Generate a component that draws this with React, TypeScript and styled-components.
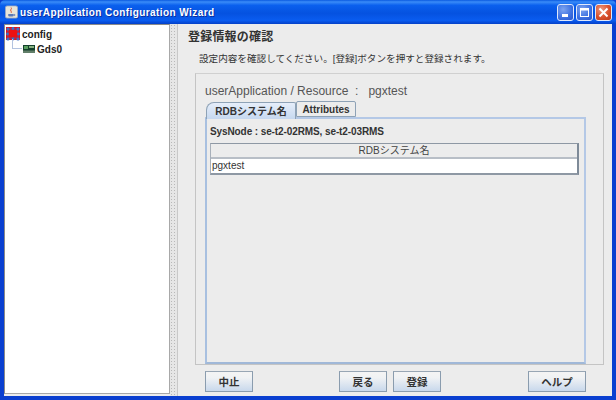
import React from "react";
import styled, { createGlobalStyle } from "styled-components";

const Global = createGlobalStyle`
  html, body { margin: 0; padding: 0; background: #ececec; }
  body { font-family: "Liberation Sans", "Noto Sans CJK JP", sans-serif; }
  * { box-sizing: border-box; }
`;

const Win = styled.div`
  width: 616px; height: 400px; display: flex; flex-direction: column;
  background: #0a3fd0; overflow: hidden;
`;
const TitleBar = styled.div`
  height: 24px; flex: none; display: flex; align-items: center; padding: 0 4px 0 5px;
  background: linear-gradient(180deg, #0a5ae0 0%, #3a8cf8 8%, #0a60ee 22%, #0552e0 55%, #0a5cf0 85%, #0440c8 100%);
  border-radius: 5px 5px 0 0;
`;
const TitleIcon = styled.svg`width: 13px; height: 14px; flex: none; margin-right: 2px;`;
const TitleText = styled.div`
  color: #fff; font: bold 10px "Liberation Sans", sans-serif; letter-spacing: 0.42px;
  text-shadow: 1px 1px 0 #0a2fa0; flex: 1; white-space: nowrap;
`;
const WinBtns = styled.div`display: flex; gap: 2px;`;
const WinBtn = styled.div<{ $close?: boolean }>`
  width: 17px; height: 17px; border: 1px solid #dfe8fb; border-radius: 3px;
  display: flex; align-items: center; justify-content: center;
  background: ${(p) => p.$close
    ? "radial-gradient(circle at 35% 30%, #ee9a80, #d8502c 55%, #bb3a1a)"
    : "radial-gradient(circle at 35% 30%, #7da4f0, #3b6fe0 60%, #2a55cc)"};
`;
const Body = styled.div`
  flex: 1; min-height: 0; display: flex; margin: 0 4px 4px 4px; background: #ececec;
`;
const TreePane = styled.div`
  width: 166px; flex: none; background: #fff; padding: 2px 0 0 1px; margin-bottom: 2px;
  border: 1px solid #a8a8a8; border-top-color: #8a8a8a; border-left-color: #8a8a8a;
`;
const TreeRow = styled.div<{ $indent?: boolean }>`
  height: 14px; display: flex; align-items: center; gap: 2px; position: relative;
  font: bold 10px "Liberation Sans", sans-serif; color: #222;
  margin-left: ${(p) => (p.$indent ? "17px" : "0")};
  margin-bottom: 1px;
`;
const Elbow = styled.span`
  position: absolute; left: -11px; top: -3px; width: 10px; height: 10px;
  border-left: 1px solid #b4c4e0; border-bottom: 1px solid #b4c4e0;
`;
const Splitter = styled.div`
  width: 8px; flex: none; background: #e6e6e6;
  background-image: radial-gradient(#b8b8b8 0.6px, transparent 0.8px);
  background-size: 3px 3px;
  border-right: 1px solid #c8c8c8;
`;
const Main = styled.div`
  flex: 1; min-width: 0; display: flex; flex-direction: column; padding: 5px 16px 2px 17px;
`;
const Heading = styled.div`
  font-size: 12px; font-weight: 700; color: #333; line-height: 16px; margin-left: -7px;
  letter-spacing: 0.2px;
`;
const Sub = styled.div`
  font-size: 9.6px; color: #333; line-height: 14px; margin: 7px 0 0 4px; white-space: nowrap;
`;
const Frame = styled.div`
  flex: none; height: 292px; margin: 7px -8px 0 0; padding: 10px 9px 0 9px;
  border: 1px solid #c4c4c4; border-top-color: #d0d0d0; display: flex; flex-direction: column;
`;
const ResLine = styled.div`
  font-size: 12px; color: #555; line-height: 14px; white-space: pre;
`;
const Tabs = styled.div`
  display: flex; align-items: flex-end; height: 16px; margin: 3px 0 0 1px; z-index: 1;
`;
const Tab = styled.div<{ $active?: boolean }>`
  height: ${(p) => (p.$active ? "17px" : "16px")};
  width: ${(p) => (p.$active ? "90px" : "60px")};
  margin-bottom: ${(p) => (p.$active ? "-2px" : "0")};
  padding-bottom: ${(p) => (p.$active ? "2px" : "0")};
  border: 1px solid #8ea2b6; border-bottom: ${(p) => (p.$active ? "none" : "1px solid #8ea2b6")};
  border-radius: ${(p) => (p.$active ? "8px 2px 0 0" : "2px 2px 0 0")};
  background: ${(p) => (p.$active ? "linear-gradient(180deg,#e6eefa,#c6d8ef)" : "#ececec")};
  font-size: 10px; font-weight: 700; color: #333;
  display: flex; align-items: center; justify-content: center;
`;
const TabPanel = styled.div`
  flex: none; height: 247px; padding: 6px 6px 0 3px;
  border: 2px solid #b4c8e6; border-left-color: #a8c0e0; border-bottom-color: #a0b8d8;
  width: 381px;
`;
const SysNode = styled.div`
  font-size: 10px; font-weight: 700; color: #333; line-height: 14px; white-space: pre;
  letter-spacing: -0.1px;
`;
const Table = styled.div`
  margin-top: 4px; width: 369px; border: 1px solid #8e98a4; border-left-color: #a8b0ba;
  border-right: 2px solid #7e8a98; border-bottom: 2px solid #8e98a4;
`;
const HeadCell = styled.div`
  height: 15px; background: #ececec; border-bottom: 2px solid #b8bec6;
  font-size: 10px; color: #444; text-align: center; line-height: 14px;
`;
const BodyCell = styled.div`
  height: 14px; background: #fff; font-size: 10px; color: #333; line-height: 14px; padding-left: 1px;
`;
const Footer = styled.div`
  display: flex; align-items: center; margin-top: 6px; padding: 0 0 0 10px; margin-right: -8px;
`;
const Btn = styled.div<{ $w?: number; $gap?: number }>`
  width: ${(p) => p.$w ?? 48}px; height: 21px; margin-left: ${(p) => p.$gap ?? 0}px;
  border: 1px solid #8a9cae; border-top-color: #98a6b4;
  background: linear-gradient(180deg, #f4f4f4 0%, #f0f2f4 30%, #c8d8ec 100%);
  font-size: 10.5px; font-weight: 700; color: #333;
  display: flex; align-items: center; justify-content: center; flex: none;
`;

function JavaIcon() {
  return (
    <TitleIcon viewBox="0 0 16 16">
      <rect x="0.5" y="0.5" width="15" height="15" rx="2" fill="#e8e4d8" stroke="#9aa6c0" />
      <path d="M4 10.5h6.5v1.5a1.5 1.5 0 0 1-1.5 1.5H5.5A1.5 1.5 0 0 1 4 12z" fill="#5a78b8" />
      <path d="M7.5 2.5c1.5 1.5-1.5 2.5-.3 4.2.5.7.9 1.3.5 2.3" fill="none" stroke="#d8502c" strokeWidth="1.2" />
      <path d="M10.5 11h1.6v1.4h-1.6" fill="none" stroke="#5a78b8" />
    </TitleIcon>
  );
}

function ConfigIcon() {
  return (
    <svg width="14" height="14" viewBox="0 0 14 14" style={{ flex: "none" }}>
      <rect width="14" height="13" fill="#ee1010" />
      <path d="M3 2L11 2M2 2L2 11M12 2L12 11M3 11L11 11" stroke="#3a60c0" strokeWidth="0.6" />
      <circle cx="2" cy="2" r="1.6" fill="#3a70c8" />
      <circle cx="7" cy="1.5" r="1.4" fill="#3a70c8" />
      <circle cx="12" cy="2" r="1.6" fill="#3a70c8" />
      <circle cx="1.5" cy="7" r="1.4" fill="#3a70c8" />
      <circle cx="12.5" cy="7" r="1.4" fill="#3a70c8" />
      <circle cx="2" cy="12" r="1.6" fill="#3a70c8" />
      <circle cx="7" cy="12" r="1.4" fill="#3a70c8" />
      <circle cx="12" cy="12" r="1.6" fill="#3a70c8" />
    </svg>
  );
}

function GdsIcon() {
  return (
    <svg width="12" height="9" viewBox="0 0 12 9" style={{ flex: "none" }}>
      <rect width="12" height="8" fill="#14402c" />
      <rect x="1" y="1" width="4" height="3" fill="#5aa060" />
      <rect x="6" y="1" width="5" height="2" fill="#88b080" />
      <path d="M1 5.5V8M3 5.5V8M5 5.5V8M7 5.5V8M9 5.5V8M11 5.5V8" stroke="#d8e0c8" strokeWidth="0.8" />
    </svg>
  );
}

export default function App() {
  return (
    <Win>
      <Global />
      <TitleBar>
        <JavaIcon />
        <TitleText>userApplication Configuration Wizard</TitleText>
        <WinBtns>
          <WinBtn>
            <svg width="11" height="11" viewBox="0 0 11 11"><rect x="2" y="7" width="6" height="3" fill="#fff" /></svg>
          </WinBtn>
          <WinBtn>
            <svg width="11" height="11" viewBox="0 0 11 11"><rect x="1.5" y="1.5" width="8" height="8" fill="none" stroke="#fff" /><rect x="1" y="1" width="9" height="2.5" fill="#fff" /></svg>
          </WinBtn>
          <WinBtn $close>
            <svg width="11" height="11" viewBox="0 0 11 11"><path d="M1.5 1.5L9.5 9.5M9.5 1.5L1.5 9.5" stroke="#fff" strokeWidth="2" /></svg>
          </WinBtn>
        </WinBtns>
      </TitleBar>
      <Body>
        <TreePane>
          <TreeRow><ConfigIcon />config</TreeRow>
          <TreeRow $indent><Elbow /><GdsIcon />Gds0</TreeRow>
        </TreePane>
        <Splitter />
        <Main>
          <Heading>登録情報の確認</Heading>
          <Sub>設定内容を確認してください。[登録]ボタンを押すと登録されます。</Sub>
          <Frame>
            <ResLine>{"userApplication / Resource  :   pgxtest"}</ResLine>
            <Tabs>
              <Tab $active>RDBシステム名</Tab>
              <Tab>Attributes</Tab>
            </Tabs>
            <TabPanel>
              <SysNode>{"SysNode : se-t2-02RMS, se-t2-03RMS"}</SysNode>
              <Table>
                <HeadCell>RDBシステム名</HeadCell>
                <BodyCell>pgxtest</BodyCell>
              </Table>
            </TabPanel>
          </Frame>
          <Footer>
            <Btn>中止</Btn>
            <Btn $gap={86}>戻る</Btn>
            <Btn $gap={6}>登録</Btn>
            <Btn $w={58} $gap={87}>ヘルプ</Btn>
          </Footer>
        </Main>
      </Body>
    </Win>
  );
}
